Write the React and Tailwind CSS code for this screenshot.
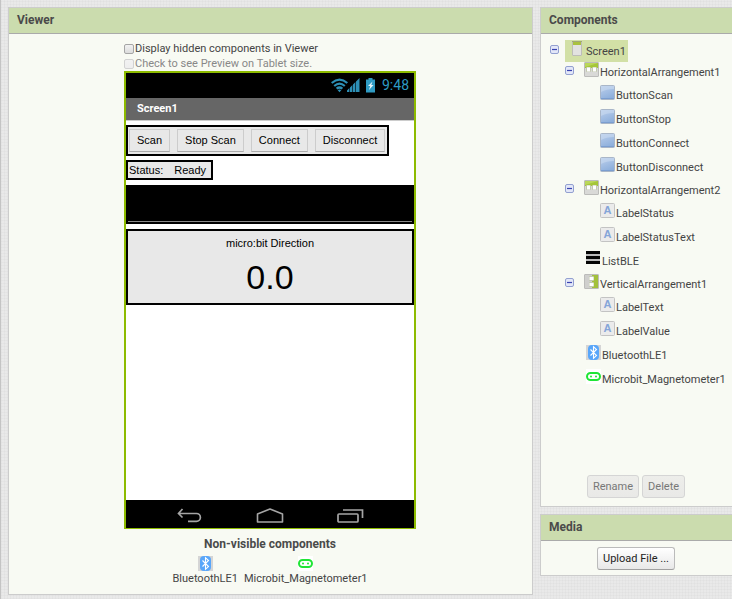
import React from "react";

function Panel({ title, className = "", children }) {
  return (
    <section className={`border border-[#ccc] bg-[#f8faf3] ${className}`}>
      <h2 className="h-[26px] border-b border-[#aaa] bg-[#cbdcae] pl-[8px] text-[12px] leading-[25px] font-bold text-[#4a4a4a]">
        {title}
      </h2>
      {children}
    </section>
  );
}

function ScreenIcon() {
  return (
    <svg width="15" height="15" viewBox="0 0 15 15" className="block">
      <rect x="0.5" y="0.5" width="9" height="14" rx="0.5" fill="#e2e2e0" stroke="#bdbdb8" />
      <rect x="1" y="1" width="8" height="3" fill="#a9c13f" />
      <path d="M0 0.5h10" stroke="#a0a878" />
    </svg>
  );
}

function HorizontalIcon() {
  return (
    <svg width="15" height="15" viewBox="0 0 15 15" className="block">
      <rect x="0.5" y="0.5" width="14" height="14" rx="0.5" fill="#d9d9d7" stroke="#bcbcba" />
      <path d="M1 1h13v5H1z" fill="#a5c639" />
      <path d="M1 1h13L1 5z" fill="#bad75a" />
      <rect x="2" y="5" width="5" height="5" rx="1" fill="#c2c9ae" />
      <rect x="8" y="5" width="5" height="5" rx="1" fill="#c2c9ae" />
      <rect x="3" y="5.500" width="3" height="4" fill="#fff" />
      <rect x="9" y="5.500" width="3" height="4" fill="#fff" />
    </svg>
  );
}

function VerticalIcon() {
  return (
    <svg width="15" height="15" viewBox="0 0 15 15" className="block">
      <rect x="0.5" y="0.5" width="14" height="14" rx="0.5" fill="#cfcfcd" stroke="#bcbcba" />
      <path d="M8 1h6v13H8z" fill="#a3c13c" />
      <rect x="5" y="2" width="5" height="5" rx="1" fill="#c2c9ae" />
      <rect x="5" y="8" width="5" height="5" rx="1" fill="#c2c9ae" />
      <rect x="5.500" y="3" width="4" height="3" fill="#fff" />
      <rect x="5.500" y="9" width="4" height="3" fill="#fff" />
    </svg>
  );
}

function ButtonIcon() {
  return (
    <svg width="15" height="15" viewBox="0 0 15 15" className="block">
      <defs>
        <linearGradient id="btnFill" x1="0" y1="0" x2="0.4" y2="1">
          <stop offset="0" stopColor="#bdd0ec" />
          <stop offset="1" stopColor="#8fb0dc" />
        </linearGradient>
      </defs>
      <rect x="0.5" y="0.5" width="14" height="14" rx="1" fill="url(#btnFill)" stroke="#a9b6c8" />
      <path d="M1 1h13v3Q6 4 1 7z" fill="#c9daf0" opacity="0.6" />
      <path d="M1 13.5h13" stroke="#7b9ed0" />
    </svg>
  );
}

function LabelIcon() {
  return (
    <svg width="15" height="15" viewBox="0 0 15 15" className="block">
      <rect x="0.5" y="0.5" width="14" height="14" rx="1" fill="#ebebeb" stroke="#c3c3c3" />
      <text x="7.5" y="11" textAnchor="middle" fontFamily="Liberation Sans, sans-serif" fontSize="11" fontWeight="bold" fill="#85a5d8">
        A
      </text>
    </svg>
  );
}

function ListIcon() {
  return (
    <svg width="15" height="15" viewBox="0 0 15 15" className="block">
      <path d="M0 0h14v13H0z" fill="#bbb" />
      <path d="M0 1.5h14M0 6.500h14M0 11.500h14" stroke="#050505" strokeWidth="3" />
    </svg>
  );
}

function BluetoothIcon() {
  return (
    <svg width="15" height="15" viewBox="0 0 15 15" className="block">
      <path d="M0 0h15v15H0z" fill="#d5d5d5" />
      <rect x="2" y="0" width="11" height="15" rx="4" fill="#58a6fa" />
      <path d="M4.5 4.5l6 6L7.5 13.3V1.7l3 2.8-6 6" fill="none" stroke="#fff" strokeWidth="1.1" />
    </svg>
  );
}

function MicrobitIcon() {
  return (
    <svg width="15" height="15" viewBox="0 0 15 15" className="block">
      <path d="M0 0h15v15H0z" fill="#fff" />
      <rect x="1" y="4" width="13" height="7" rx="3.5" fill="#fff" stroke="#1fe535" strokeWidth="2" />
      <circle cx="5" cy="7.5" r="1" fill="#1fe535" />
      <circle cx="10" cy="7.5" r="1" fill="#1fe535" />
    </svg>
  );
}

function Toggle({ label }) {
  return (
    <button type="button" aria-label={`Collapse ${label}`} className="mt-[5px] block h-[9px] w-[9px]">
      <svg width="9" height="9" viewBox="0 0 9 9" className="block">
        <rect x="0.5" y="0.5" width="8" height="8" rx="1.5" fill="#e3e7f8" stroke="#93a0d0" />
        <path d="M2 4.5h5" stroke="#3a43b0" strokeWidth="1.2" />
      </svg>
    </button>
  );
}

function Group({ icon, name, children }) {
  return (
    <li>
      <div className="flex h-[22px] items-start pl-[24px]">
        <Toggle label={name} />
        <span className="ml-[10px] mt-px w-[16px]">{icon}</span>
        <span className="leading-[24px]">{name}</span>
      </div>
      <ul>{children}</ul>
    </li>
  );
}

function Leaf({ icon, name, root = false }) {
  return (
    <li className={`flex h-[24px] items-start ${root ? "pl-[45px]" : "pl-[59px]"}`}>
      <span className="mt-[2px] w-[16px]">{icon}</span>
      <span className="leading-[26px]">{name}</span>
    </li>
  );
}

function Tree() {
  return (
    <div className="pt-[6px] text-[11px] whitespace-nowrap text-[#444]">
      <div className="flex h-[21px] items-start pl-[9px]">
        <Toggle label="Screen1" />
        <div className="ml-[6px] flex h-[22px] w-[63px] bg-[#d2e0a6] pl-[7px]">
          <span className="mt-px w-[14px]">
            <ScreenIcon />
          </span>
          <span className="leading-[24px]">Screen1</span>
        </div>
      </div>
      <ul>
        <Group icon={<HorizontalIcon />} name="HorizontalArrangement1">
          <Leaf icon={<ButtonIcon />} name="ButtonScan" />
          <Leaf icon={<ButtonIcon />} name="ButtonStop" />
          <Leaf icon={<ButtonIcon />} name="ButtonConnect" />
          <Leaf icon={<ButtonIcon />} name="ButtonDisconnect" />
        </Group>
        <Group icon={<HorizontalIcon />} name="HorizontalArrangement2">
          <Leaf icon={<LabelIcon />} name="LabelStatus" />
          <Leaf icon={<LabelIcon />} name="LabelStatusText" />
        </Group>
        <Leaf root icon={<ListIcon />} name="ListBLE" />
        <Group icon={<VerticalIcon />} name="VerticalArrangement1">
          <Leaf icon={<LabelIcon />} name="LabelText" />
          <Leaf icon={<LabelIcon />} name="LabelValue" />
        </Group>
        <Leaf root icon={<BluetoothIcon />} name="BluetoothLE1" />
        <Leaf root icon={<MicrobitIcon />} name="Microbit_Magnetometer1" />
      </ul>
    </div>
  );
}

function Option({ id, label, disabled = false }) {
  return (
    <div className="flex h-[15px] items-center gap-px">
      <input
        id={id}
        type="checkbox"
        disabled={disabled}
        className="mt-px h-[10px] w-[10px] appearance-none rounded-[2px] border border-[#a5a5a5] bg-linear-to-b from-[#f2f2f2] to-[#dcdcdc] disabled:border-[#d2d2d2] disabled:to-[#eee]"
      />
      <label htmlFor={id} className={`text-[11px] leading-[17px] ${disabled ? "text-[#888]" : "text-[#444]"}`}>
        {label}
      </label>
    </div>
  );
}

function StatusBar() {
  return (
    <div className="flex h-[25px] items-center justify-end bg-black pr-[5px] text-[#2d9cc4]">
      <svg width="45" height="15" viewBox="0 0 45 15" className="mr-[6px] block">
        <g fill="none" stroke="#2d8fb5" strokeWidth="2.200">
          <path d="M0.700 5Q8.500 -1.700 16.300 5" />
          <path d="M3.200 8Q8.500 3.400 13.800 8" />
          <path d="M5.600 10.700Q8.500 8.300 11.400 10.700" />
        </g>
        <path d="M6.600 12L8.500 14.300L10.400 12Q8.500 10.800 6.600 12z" fill="#2d8fb5" />
        <path d="M16 14v-1.500l2.400-2.400V14zM19 14V9.500l2.400-2.400V14zM22 14V6.500l2.400-2.400V14zM25 14V3.500l3.500-3.500V14z" fill="#2d8fb5" />
        <path d="M37.500 0h4v1.500h2.500v13h-9v-13h2.500z" fill="#2f9ac2" />
        <path d="M41.500 3.500L37 8h2.200L38 12l4.500-5h-2.200z" fill="#e8f6fb" />
      </svg>
      <span className="text-[14px] leading-[25px]">9:48</span>
    </div>
  );
}

function NavBar() {
  return (
    <div className="flex h-[28px] items-center justify-center gap-[53px] bg-black pt-[4px]">
      <svg width="27" height="16" viewBox="0 0 27 16" className="block" fill="none" stroke="#a5a5a5" strokeWidth="1.7">
        <path d="M6.500 1L2.500 5.500l4 4M2.500 5.500H20.500a3.700 3.700 0 0 1 0 7.800H12" />
      </svg>
      <svg width="28" height="16" viewBox="0 0 28 16" className="block" fill="none" stroke="#a5a5a5" strokeWidth="1.600">
        <path d="M1.500 6L14 1l12.500 5v8h-25z" strokeLinejoin="round" />
      </svg>
      <svg width="27" height="16" viewBox="0 0 27 16" className="block" fill="none" stroke="#a5a5a5" strokeWidth="1.700">
        <rect x="1" y="6" width="20" height="8" rx="1" />
        <path d="M6 2h19.500v8" />
      </svg>
    </div>
  );
}

function PhoneButton({ children }) {
  return (
    <button type="button" className="h-[23px] border border-[#ccc] border-b-[#aaa] bg-[#e8e8e8] px-[7px] text-[11px] leading-[21px] text-black">
      {children}
    </button>
  );
}

function Phone() {
  return (
    <div className="flex h-[458px] flex-col border-2 border-b border-[#8dbb00] bg-white font-['Liberation_Sans',Arial,sans-serif] text-[11px] text-black">
      <div className="font-[Roboto,sans-serif]">
        <StatusBar />
        <div className="h-[23px] border-b border-[#ccc] bg-[#666] pl-[11px] text-[11px] leading-[21px] font-bold text-white">
          Screen1
        </div>
      </div>
      <div className="mt-[4px] flex h-[31px] gap-[7px] self-start border-2 border-black bg-[#e8e8e8] py-[2px] pr-[2px] pl-px">
        <PhoneButton>Scan</PhoneButton>
        <PhoneButton>Stop Scan</PhoneButton>
        <PhoneButton>Connect</PhoneButton>
        <PhoneButton>Disconnect</PhoneButton>
      </div>
      <div className="mt-[4px] flex h-[20px] gap-[11px] self-start border-2 border-black bg-[#e8e8e8] pr-[5px] pl-px leading-[16px]">
        <span>Status:</span>
        <span>Ready</span>
      </div>
      <div className="mt-[5px] flex h-[39px] flex-col justify-end border-2 border-black bg-black">
        <div className="h-px bg-[#888]" />
      </div>
      <div className="mt-[5px] flex h-[76px] flex-col items-center border-2 border-black bg-[#e8e8e8] pt-[4px]">
        <span className="leading-[16px]">micro:bit Direction</span>
        <span className="mt-[6px] text-[34px] leading-[40px]">0.0</span>
      </div>
      <div className="flex-1" />
      <NavBar />
    </div>
  );
}

function Action({ children, disabled = false }) {
  return (
    <button
      type="button"
      disabled={disabled}
      className="h-[23px] rounded-[3px] border border-[#bbb] border-b-[#a0a0a0] bg-linear-to-b from-white to-[#e8e8e8] px-[5px] text-[11px] leading-[19px] text-[#222] disabled:border-[#d5d5d5] disabled:from-[#ededea] disabled:to-[#e9e9e7] disabled:text-[#777]"
    >
      {children}
    </button>
  );
}

export default function App() {
  return (
    <main className="flex min-h-screen items-start gap-[7px] border-l border-[#c4c4c4] bg-[#e9e9e9] bg-[repeating-linear-gradient(0deg,#00000005_0_1px,transparent_1px_3px),repeating-linear-gradient(90deg,#00000005_0_1px,transparent_1px_3px)] pt-[7px] pl-[7px] font-[Roboto,sans-serif]">
      <Panel title="Viewer" className="min-w-0 flex-1">
        <div className="flex flex-col items-center pt-[7px] pr-px pb-[8px]">
          <div className="w-[292px]">
            <Option id="hidden" label="Display hidden components in Viewer" />
            <Option id="tablet" label="Check to see Preview on Tablet size." disabled />
            <Phone />
          </div>
          <h3 className="mt-[7px] text-[12px] leading-[16px] font-bold text-[#4a4a4a]">Non-visible components</h3>
          <div className="mt-[4px] flex gap-[6px] text-[11px] leading-[15px] text-[#444]">
            <div className="flex flex-col items-center">
              <BluetoothIcon />
              <span>BluetoothLE1</span>
            </div>
            <div className="flex flex-col items-center">
              <MicrobitIcon />
              <span>Microbit_Magnetometer1</span>
            </div>
          </div>
        </div>
      </Panel>
      <div className="flex w-48 flex-col gap-[7px]">
        <Panel title="Components" className="border-r-0">
          <Tree />
          <div className="mt-[84px] flex justify-center gap-[3px] pr-px pb-[8px]">
            <Action disabled>Rename</Action>
            <Action disabled>Delete</Action>
          </div>
        </Panel>
        <Panel title="Media" className="border-r-0">
          <div className="flex justify-center pt-[6px] pr-px pb-[5px]">
            <Action>Upload File ...</Action>
          </div>
        </Panel>
      </div>
    </main>
  );
}
